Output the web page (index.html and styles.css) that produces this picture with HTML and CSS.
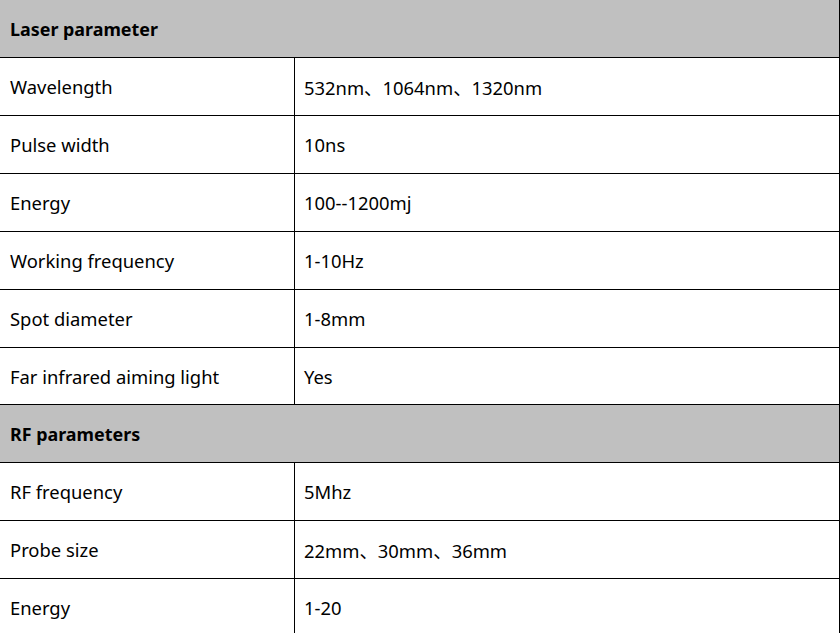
FILE: index.html
```html
<!DOCTYPE html>
<html>
<head>
<meta charset="utf-8">
<link rel="stylesheet" href="styles.css">
</head>
<body>
<div class="table">
  <div class="row head"><div class="cell full">Laser parameter</div></div>
  <div class="row"><div class="cell key">Wavelength</div><div class="cell val">532nm、1064nm、1320nm</div></div>
  <div class="row"><div class="cell key">Pulse width</div><div class="cell val">10ns</div></div>
  <div class="row"><div class="cell key">Energy</div><div class="cell val">100--1200mj</div></div>
  <div class="row"><div class="cell key">Working frequency</div><div class="cell val">1-10Hz</div></div>
  <div class="row"><div class="cell key">Spot diameter</div><div class="cell val">1-8mm</div></div>
  <div class="row short"><div class="cell key">Far infrared aiming light</div><div class="cell val">Yes</div></div>
  <div class="row head"><div class="cell full">RF parameters</div></div>
  <div class="row"><div class="cell key">RF frequency</div><div class="cell val">5Mhz</div></div>
  <div class="row"><div class="cell key">Probe size</div><div class="cell val">22mm、30mm、36mm</div></div>
  <div class="row"><div class="cell key">Energy</div><div class="cell val">1-20</div></div>
</div>
</body>
</html>
```
FILE: styles.css
```css
html, body {
  margin: 0;
  padding: 0;
  background: #fff;
}
body {
  font-family: "Noto Sans", "Open Sans", "Noto Sans CJK SC", sans-serif;
  font-size: 18.4px;
  color: #000;
  overflow: hidden;
}
.table {
  width: 839px;
  border-right: 1px solid #000;
}
.row {
  display: grid;
  grid-template-columns: 295px 1fr;
  height: 58px;
  box-sizing: border-box;
  border-bottom: 1px solid #000;
}
.row.short {
  height: 57px;
}
.row.head {
  grid-template-columns: 1fr;
  background: #c0c0c0;
}
.cell {
  display: flex;
  align-items: center;
  padding-left: 10px;
}
.key {
  border-right: 1px solid #000;
}
.val {
  padding-left: 9px;
}
.full {
  font-weight: 700;
  font-size: 17.9px;
}
```
